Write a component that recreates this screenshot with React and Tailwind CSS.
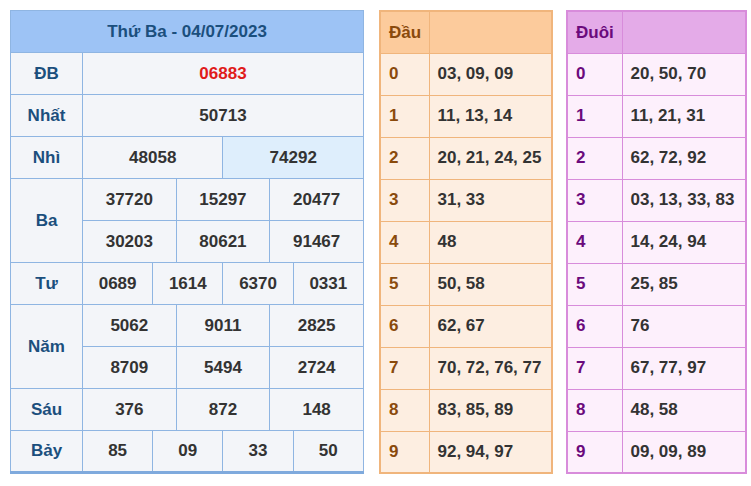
const td = "border border-[#8fb5e2] text-center h-[42px] p-0";
const lbl = td + " text-[#1b4f7d] w-[72px]";

function Main() {
  return (
    <table className="border-collapse table-fixed w-[354px] bg-[#f3f5f9] text-[#333] border-b-[3px] border-b-[#7faadd]" style={{ borderBottomStyle: "solid" }}>
      <colgroup>
        <col className="w-[72px]" />
        {Array.from({ length: 12 }).map((_, i) => <col key={i} />)}
      </colgroup>
      <tbody>
        <tr><td colSpan={13} className={td + " bg-[#9dc3f5] text-[#1b4f7d]"}>Thứ Ba - 04/07/2023</td></tr>
        <tr><td className={lbl}>ĐB</td><td colSpan={12} className={td + " text-[#e01b1b]"}>06883</td></tr>
        <tr><td className={lbl}>Nhất</td><td colSpan={12} className={td}>50713</td></tr>
        <tr><td className={lbl}>Nhì</td><td colSpan={6} className={td}>48058</td><td colSpan={6} className={td + " bg-[#deeefc]"}>74292</td></tr>
        <tr><td rowSpan={2} className={lbl}>Ba</td>{["37720","15297","20477"].map(v=><td key={v} colSpan={4} className={td}>{v}</td>)}</tr>
        <tr>{["30203","80621","91467"].map(v=><td key={v} colSpan={4} className={td}>{v}</td>)}</tr>
        <tr><td className={lbl}>Tư</td>{["0689","1614","6370","0331"].map(v=><td key={v} colSpan={3} className={td}>{v}</td>)}</tr>
        <tr><td rowSpan={2} className={lbl}>Năm</td>{["5062","9011","2825"].map(v=><td key={v} colSpan={4} className={td}>{v}</td>)}</tr>
        <tr>{["8709","5494","2724"].map(v=><td key={v} colSpan={4} className={td}>{v}</td>)}</tr>
        <tr><td className={lbl}>Sáu</td>{["376","872","148"].map(v=><td key={v} colSpan={4} className={td}>{v}</td>)}</tr>
        <tr><td className={lbl}>Bảy</td>{["85","09","33","50"].map(v=><td key={v} colSpan={3} className={td}>{v}</td>)}</tr>
      </tbody>
    </table>
  );
}

function Side({ title, data, w, first, c }) {
  const cell = "border h-[42px] p-0 pl-[8px] text-left whitespace-nowrap overflow-hidden " + c.border;
  return (
    <table className={"border-collapse table-fixed text-[#333] border-2 " + c.border + " " + c.bg} style={{ width: w }}>
      <colgroup><col style={{ width: first }} /><col /></colgroup>
      <tbody>
        <tr className={c.head}><td className={cell + " " + c.lbl}>{title}</td><td className={cell}></td></tr>
        {data.map((v, i) => (
          <tr key={i}><td className={cell + " " + c.lbl}>{i}</td><td className={cell}>{v}</td></tr>
        ))}
      </tbody>
    </table>
  );
}

export default function App() {
  return (
    <div className="w-[751px] h-[486px] bg-white flex items-start pt-[10px] pl-[10px] font-bold text-[17px] overflow-hidden" style={{ fontFamily: '"Liberation Sans", Arial, sans-serif' }}>
      <Main />
      <div className="ml-[15px]">
        <Side title="Đầu" w={174} first={49}
          c={{ border: "border-[#f0b57c]", bg: "bg-[#fdeee1]", head: "bg-[#fccb9c]", lbl: "text-[#8a4a0c]" }}
          data={["03, 09, 09","11, 13, 14","20, 21, 24, 25","31, 33","48","50, 58","62, 67","70, 72, 76, 77","83, 85, 89","92, 94, 97"]} />
      </div>
      <div className="ml-[13px]">
        <Side title="Đuôi" w={181} first={55}
          c={{ border: "border-[#d88cdb]", bg: "bg-[#fdf0fc]", head: "bg-[#e4abe8]", lbl: "text-[#6b0a7c]" }}
          data={["20, 50, 70","11, 21, 31","62, 72, 92","03, 13, 33, 83","14, 24, 94","25, 85","76","67, 77, 97","48, 58","09, 09, 89"]} />
      </div>
    </div>
  );
}
